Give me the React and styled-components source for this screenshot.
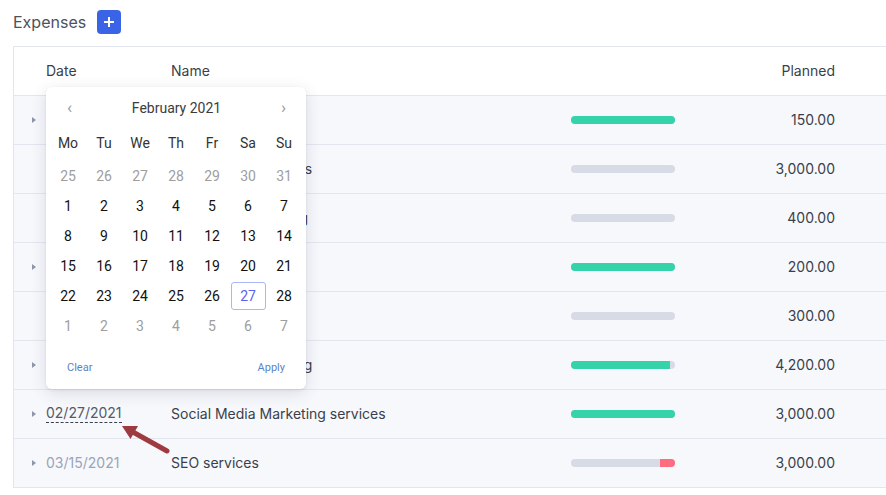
import React from "react";
import styled, { createGlobalStyle } from "styled-components";

const GlobalStyle = createGlobalStyle`
  html, body {
    margin: 0;
    padding: 0;
    background: #ffffff;
    overflow: hidden;
  }
  body {
    font-family: Inter, "Noto Sans", sans-serif;
    color: #3a3f4b;
  }
`;

const rows = [
  { date: "", name: "Brand strategy", planned: "150.00", fill: 100, color: "#35d3a9", caret: true },
  { date: "", name: "Email marketing tools", planned: "3,000.00", fill: 0, caret: false },
  { date: "", name: "Influencer Marketing", planned: "400.00", fill: 0, caret: false },
  { date: "", name: "Print ads", planned: "200.00", fill: 100, color: "#35d3a9", caret: true },
  { date: "", name: "Domain renewal", planned: "300.00", fill: 0, caret: false },
  { date: "", name: "Newsletter Marketing", planned: "4,200.00", fill: 95, color: "#35d3a9", caret: true },
  { date: "02/27/2021", name: "Social Media Marketing services", planned: "3,000.00", fill: 100, color: "#35d3a9", caret: true, active: true },
  { date: "03/15/2021", name: "SEO services", planned: "3,000.00", fill: 14, color: "#ff6b81", caret: true, right: true },
];

const weekdays = ["Mo", "Tu", "We", "Th", "Fr", "Sa", "Su"];
const days = [
  [25, 26, 27, 28, 29, 30, 31].map((d) => ({ d, out: true })),
  ...[0, 1, 2, 3].map((w) =>
    [1, 2, 3, 4, 5, 6, 7].map((n) => ({ d: w * 7 + n }))
  ),
  [1, 2, 3, 4, 5, 6, 7].map((d) => ({ d, out: true })),
].flat();

export default function App() {
  return (
    <Page>
      <GlobalStyle />
      <Header>
        <Title>Expenses</Title>
        <AddButton aria-label="add">
          <svg width="12" height="12" viewBox="0 0 12 12">
            <path d="M6 1v10M1 6h10" stroke="#fff" strokeWidth="2" />
          </svg>
        </AddButton>
      </Header>
      <Table>
        <HeadRow>
          <span />
          <HeadCell>Date</HeadCell>
          <HeadCell>Name</HeadCell>
          <span />
          <HeadCell $right>Planned</HeadCell>
        </HeadRow>
        {rows.map((r, i) => (
          <Row key={i}>
            <CaretCell>{r.caret && <Caret />}</CaretCell>
            <DateCell $active={r.active}>{r.date}</DateCell>
            <NameCell>{r.name}</NameCell>
            <Bar>
              {r.fill > 0 && (
                <BarFill
                  $color={r.color}
                  $right={r.right}
                  style={{ width: `${r.fill}%` }}
                />
              )}
            </Bar>
            <Amount>{r.planned}</Amount>
          </Row>
        ))}

        <Picker>
          <PickerHead>
            <NavArrow>‹</NavArrow>
            <Month>February 2021</Month>
            <NavArrow>›</NavArrow>
          </PickerHead>
          <Grid>
            {weekdays.map((w) => (
              <Weekday key={w}>{w}</Weekday>
            ))}
            {days.map((c, i) => (
              <Day key={i} $out={c.out} $selected={!c.out && c.d === 27}>
                {c.d}
              </Day>
            ))}
          </Grid>
          <PickerFoot>
            <FootLink>Clear</FootLink>
            <FootLink>Apply</FootLink>
          </PickerFoot>
        </Picker>

        <Pointer width="60" height="40" viewBox="0 0 60 40">
          <path d="M50 32 L15 12.5" stroke="#9e3b41" strokeWidth="5" strokeLinecap="round" />
          <path d="M5 7 L21 7 L13.5 20 Z" fill="#9e3b41" />
        </Pointer>
      </Table>
    </Page>
  );
}

const Page = styled.div`
  padding: 10px 0 0 13px;
`;

const Header = styled.div`
  display: flex;
  align-items: center;
  gap: 11px;
  height: 24px;
  margin-bottom: 12px;
`;

const Title = styled.h2`
  margin: 0;
  font-size: 16px;
  font-weight: 400;
  color: #4d525e;
`;

const AddButton = styled.button`
  width: 24px;
  height: 24px;
  border: 0;
  border-radius: 4px;
  background: #3a63e6;
  display: flex;
  align-items: center;
  justify-content: center;
  padding: 0;
`;

const Table = styled.div`
  position: relative;
  width: 900px;
  border-top: 1px solid #e4e6ef;
  border-left: 1px solid #e4e6ef;
`;

const rowGrid = `
  display: grid;
  grid-template-columns: 32px 125px 400px 104px 160px;
  align-items: center;
  line-height: 17px;
  height: 49px;
  padding-bottom: 1px;
  box-sizing: border-box;
  border-bottom: 1px solid #e4e6ef;
`;

const HeadRow = styled.div`
  ${rowGrid}
  background: #ffffff;
`;

const HeadCell = styled.div`
  font-size: 14px;
  color: #3a3f4b;
  text-align: ${(p) => (p.$right ? "right" : "left")};
`;

const Row = styled.div`
  ${rowGrid}
  background: #f7f8fc;
`;

const CaretCell = styled.div`
  display: flex;
  padding-left: 18px;
`;

const Caret = styled.span`
  width: 0;
  height: 0;
  border-top: 3.5px solid transparent;
  border-bottom: 3.5px solid transparent;
  border-left: 4px solid #8d97a9;
`;

const DateCell = styled.div`
  justify-self: start;
  font-size: 14px;
  color: ${(p) => (p.$active ? "#555a66" : "#9aa4b6")};
  border-bottom: ${(p) => (p.$active ? "1px dashed #3a3f4b" : "0")};
  line-height: 18px;
`;

const NameCell = styled.div`
  font-size: 14px;
  color: #3a3f4b;
  white-space: nowrap;
`;

const Bar = styled.div`
  position: relative;
  height: 8px;
  border-radius: 4px;
  background: #d7dbe5;
  overflow: hidden;
`;

const BarFill = styled.div`
  position: absolute;
  top: 0;
  bottom: 0;
  ${(p) => (p.$right ? "right: 0;" : "left: 0;")}
  background: ${(p) => p.$color};
`;

const Amount = styled.div`
  text-align: right;
  font-size: 14px;
  color: #3a3f4b;
`;

const Picker = styled.div`
  position: absolute;
  left: 32px;
  top: 40px;
  width: 260px;
  height: 302px;
  box-sizing: border-box;
  background: #ffffff;
  border-radius: 6px;
  box-shadow: 0 4px 16px rgba(40, 50, 80, 0.14), 0 1px 3px rgba(40, 50, 80, 0.08);
  font-family: Roboto, "Liberation Sans", sans-serif;
  padding: 10px 4px 0;
`;

const PickerHead = styled.div`
  display: flex;
  align-items: center;
  justify-content: space-between;
  height: 22px;
  padding: 0 16px 0 17px;
`;

const NavArrow = styled.span`
  font-size: 17px;
  color: #9a9a9a;
  line-height: 1;
  margin-top: -2px;
`;

const Month = styled.span`
  font-size: 14px;
  color: #3c3c3c;
`;

const Grid = styled.div`
  display: grid;
  grid-template-columns: repeat(7, 36px);
  grid-auto-rows: 30px;
  margin-top: 12px;
  justify-content: center;
  align-items: center;
  & > :nth-child(-n + 7) {
    margin-bottom: 6px;
  }
`;

const Weekday = styled.div`
  text-align: center;
  font-size: 14px;
  color: #333;
`;

const Day = styled.div`
  display: flex;
  align-items: center;
  justify-content: center;
  height: 28px;
  margin: 0 0.5px;
  box-sizing: border-box;
  border-radius: 3px;
  font-size: 14px;
  color: ${(p) => (p.$out ? "#9e9e9e" : p.$selected ? "#5a63f0" : "#111")};
  border: 1px solid ${(p) => (p.$selected ? "#a9b7f5" : "transparent")};
`;

const PickerFoot = styled.div`
  display: flex;
  justify-content: space-between;
  padding: 20px 17px 0;
`;

const FootLink = styled.span`
  font-size: 11px;
  color: #5d83c6;
`;

const Pointer = styled.svg`
  position: absolute;
  left: 103px;
  top: 372px;
`;
